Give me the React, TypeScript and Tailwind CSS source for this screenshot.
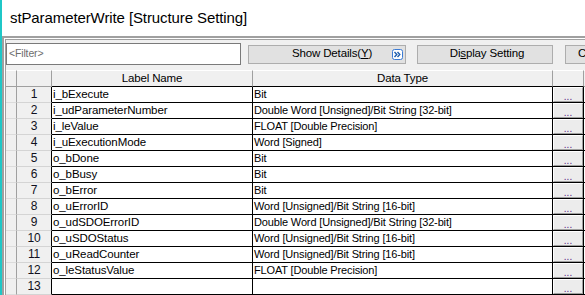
const rows: [string, string][] = [
  ['i_bExecute', 'Bit'],
  ['i_udParameterNumber', 'Double Word [Unsigned]/Bit String [32-bit]'],
  ['i_leValue', 'FLOAT [Double Precision]'],
  ['i_uExecutionMode', 'Word [Signed]'],
  ['o_bDone', 'Bit'],
  ['o_bBusy', 'Bit'],
  ['o_bError', 'Bit'],
  ['o_uErrorID', 'Word [Unsigned]/Bit String [16-bit]'],
  ['o_udSDOErrorID', 'Double Word [Unsigned]/Bit String [32-bit]'],
  ['o_uSDOStatus', 'Word [Unsigned]/Bit String [16-bit]'],
  ['o_uReadCounter', 'Word [Unsigned]/Bit String [16-bit]'],
  ['o_leStatusValue', 'FLOAT [Double Precision]'],
  ['', ''],
]

const DetailsIcon = () => (
  <svg width="11" height="11" viewBox="0 0 11 11" className="shrink-0">
    <rect x="0.5" y="0.5" width="10" height="10" rx="2" fill="#fff" stroke="#3b7bd4" />
    <path d="M2.5 3 L4.8 5.5 L2.5 8 M5.5 3 L7.8 5.5 L5.5 8" fill="none" stroke="#1f5fae" strokeWidth="1.4" />
  </svg>
)

export default function App() {
  return (
    <div
      className="w-[585px] h-[295px] overflow-hidden bg-white border-l-2 border-[#1fc7c7] flex flex-col text-black"
      style={{ fontFamily: '"Liberation Sans", Arial, sans-serif' }}
    >
      <div className="h-[36px] shrink-0 pl-[8px] flex items-center text-[15px] tracking-[-0.1px]">
        stParameterWrite [Structure Setting]
      </div>

      <div className="flex-1 border-t-2 border-l-2 border-[#a0a0a0]">
        <div className="h-full border-t border-l border-white">
          <div className="h-full border-t border-l border-[#a0a0a0] bg-[#f0f0f0] text-[11px] tracking-[-0.15px] overflow-hidden">
            {/* toolbar */}
            <div className="flex items-center h-[22px] mt-[3px] whitespace-nowrap">
              <div className="w-[235px] shrink-0 h-[22px] bg-white border border-[#7a7a7a] pl-[2px] flex items-center text-[#6d6d6d] text-[10.5px]">
                &lt;Filter&gt;
              </div>
              <div className="ml-[7px] w-[158px] shrink-0 h-[19px] bg-[#e1e1e1] border border-[#adadad] flex items-center pl-[43px] gap-[20px] text-[11.5px]">
                <span>
                  Show Details(<span className="underline">Y</span>)
                </span>
                <DetailsIcon />
              </div>
              <div className="ml-[11px] w-[136px] shrink-0 h-[19px] bg-[#e1e1e1] border border-[#adadad] flex items-center justify-center pl-[4px] text-[11.5px]">
                <span>
                  Di<span className="underline">s</span>play Setting
                </span>
              </div>
              <div className="ml-[12px] w-[100px] h-[19px] shrink-0 bg-[#e1e1e1] border border-[#adadad] flex items-center pl-[12px] text-[11.5px]">
                Cancel
              </div>
            </div>

            {/* table */}
            <div className="mt-[5px]">
              <div className="flex h-[17px] leading-[15px]">
                <div className="w-[11px] shrink-0 border-r border-b border-[#a0a0a0] border-t border-t-white" />
                <div className="w-[35px] shrink-0 border-r border-b border-[#a0a0a0] border-t border-t-white" />
                <div className="w-[201px] shrink-0 border-r border-[#a0a0a0] border-b border-b-black border-t border-t-white text-center text-[11.5px]">
                  Label Name
                </div>
                <div className="w-[300px] shrink-0 border-r border-[#a0a0a0] border-b border-b-black border-t border-t-white text-center text-[11.5px]">
                  Data Type
                </div>
                <div className="w-[31px] shrink-0 border-r border-[#a0a0a0] border-b border-b-black border-t border-t-white" />
                <div className="flex-1 border-b border-[#a0a0a0] border-t border-t-white" />
              </div>

              {rows.map(([label, type], i) => (
                <div key={i} className="flex h-[16px] leading-[15px]">
                  <div className="w-[11px] shrink-0 border-r border-[#a0a0a0] border-b border-b-[#dcdcdc]" />
                  <div className="w-[35px] shrink-0 border-r border-r-black border-b border-b-[#d4d4d4] text-center text-[12px] text-[#101020]">
                    {i + 1}
                  </div>
                  <div className="w-[201px] shrink-0 bg-white border-r border-b border-black pl-[1px] text-[11.5px] tracking-[-0.1px] whitespace-nowrap overflow-hidden">
                    {label}
                  </div>
                  <div className="w-[300px] shrink-0 bg-white border-r border-b border-black pl-[1px] whitespace-nowrap overflow-hidden">
                    {type}
                  </div>
                  <div className="w-[31px] shrink-0 border-r border-b border-black">
                    <div className="h-full bg-[#ececec] border-t border-l border-white border-r border-b border-r-[#a0a0a0] border-b-[#a0a0a0] flex items-end justify-center text-[10px] leading-[9px] text-[#5b2a86] tracking-[0px]">
                      ...
                    </div>
                  </div>
                  <div className="flex-1 bg-white border-b border-black" />
                </div>
              ))}
            </div>
          </div>
        </div>
      </div>
    </div>
  )
}
